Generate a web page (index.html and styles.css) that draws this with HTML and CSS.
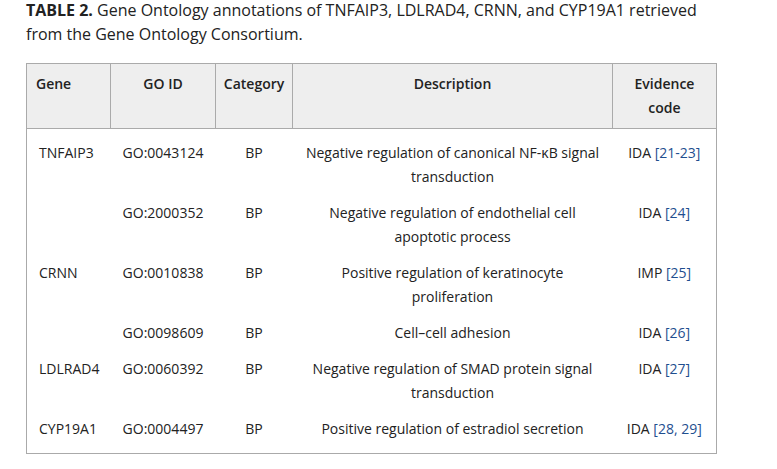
FILE: index.html
```html
<!DOCTYPE html>
<html>
<head>
<meta charset="utf-8">
<link rel="stylesheet" href="styles.css">
</head>
<body>
<div class="wrap">
  <p class="caption"><b>TABLE 2.</b> Gene Ontology annotations of TNFAIP3, LDLRAD4, CRNN, and CYP19A1 retrieved from the Gene Ontology Consortium.</p>
  <table class="go-table">
    <colgroup>
      <col class="c-gene"><col class="c-id"><col class="c-cat"><col class="c-desc"><col class="c-ev">
    </colgroup>
    <thead>
      <tr>
        <th class="left">Gene</th>
        <th>GO ID</th>
        <th>Category</th>
        <th>Description</th>
        <th>Evidence<br>code</th>
      </tr>
    </thead>
    <tbody>
      <tr class="first">
        <td class="gene">TNFAIP3</td>
        <td>GO:0043124</td>
        <td>BP</td>
        <td>Negative regulation of canonical NF-κB signal<br>transduction</td>
        <td>IDA <span class="ref">[21-23]</span></td>
      </tr>
      <tr>
        <td class="gene"></td>
        <td>GO:2000352</td>
        <td>BP</td>
        <td>Negative regulation of endothelial cell<br>apoptotic process</td>
        <td>IDA <span class="ref">[24]</span></td>
      </tr>
      <tr>
        <td class="gene">CRNN</td>
        <td>GO:0010838</td>
        <td>BP</td>
        <td>Positive regulation of keratinocyte<br>proliferation</td>
        <td>IMP <span class="ref">[25]</span></td>
      </tr>
      <tr>
        <td class="gene"></td>
        <td>GO:0098609</td>
        <td>BP</td>
        <td>Cell–cell adhesion</td>
        <td>IDA <span class="ref">[26]</span></td>
      </tr>
      <tr>
        <td class="gene">LDLRAD4</td>
        <td>GO:0060392</td>
        <td>BP</td>
        <td>Negative regulation of SMAD protein signal<br>transduction</td>
        <td>IDA <span class="ref">[27]</span></td>
      </tr>
      <tr class="last">
        <td class="gene">CYP19A1</td>
        <td>GO:0004497</td>
        <td>BP</td>
        <td>Positive regulation of estradiol secretion</td>
        <td>IDA <span class="ref">[28, 29]</span></td>
      </tr>
    </tbody>
  </table>
</div>
</body>
</html>
```
FILE: styles.css
```css
html, body {
  margin: 0;
  padding: 0;
  background: #fff;
}
body {
  font-family: "Open Sans", "Liberation Sans", sans-serif;
  color: #222;
}
.wrap {
  padding-left: 26px;
  width: 690px;
}
.caption {
  margin: -2px 0 17px 0;
  font-size: 16px;
  line-height: 24px;
  color: #222;
}
.caption b {
  font-weight: 700;
}
.go-table {
  width: 690px;
  border-collapse: collapse;
  table-layout: fixed;
  border: 1px solid #aaa;
  font-size: 14px;
  line-height: 24px;
}
.c-gene { width: 84px; }
.c-id { width: 105px; }
.c-cat { width: 77px; }
.c-desc { width: 320px; }
.c-ev { width: 104px; }
.go-table th {
  background: #eee;
  font-weight: 600;
  text-align: center;
  vertical-align: top;
  padding: 8px 6px;
  border: 1px solid #aaa;
}
.go-table th.left {
  text-align: left;
  padding-left: 9px;
}
.go-table td {
  text-align: center;
  vertical-align: top;
  padding: 6px 6px;
}
.go-table td.gene {
  text-align: left;
  padding-left: 12px;
}
.go-table tr.first td {
  padding-top: 12px;
}
.go-table tr.last td {
  padding-bottom: 12px;
}
.ref {
  color: #1f4f8f;
}
```
